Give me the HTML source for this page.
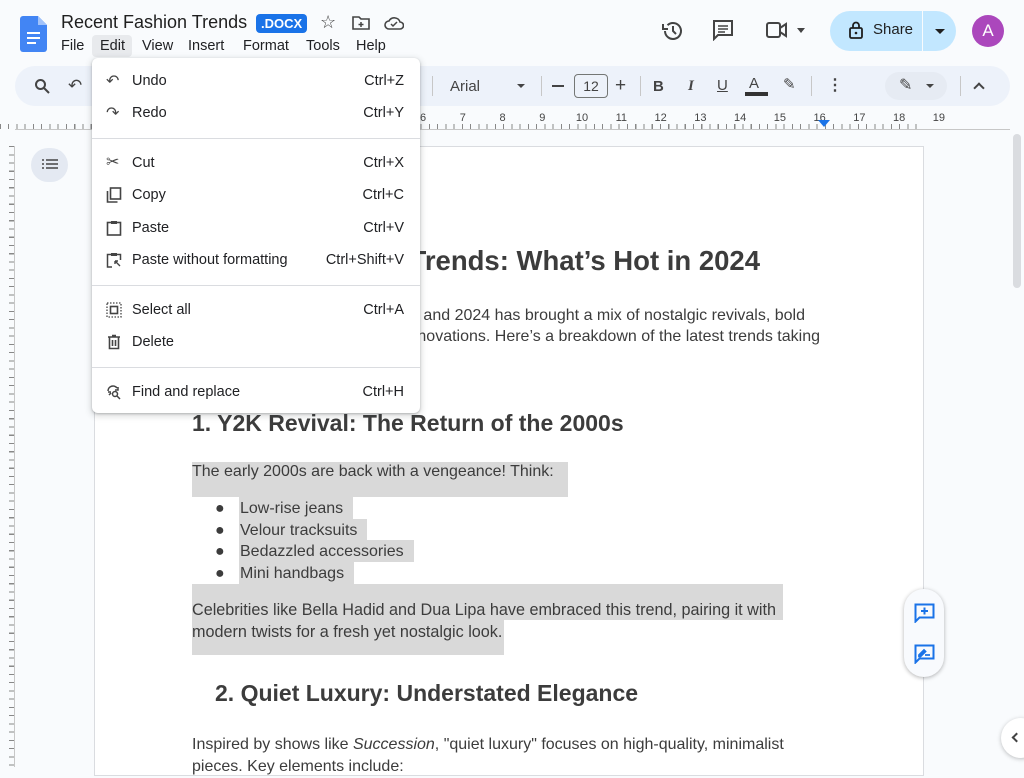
<!DOCTYPE html>
<html><head><meta charset="utf-8"><style>
*{margin:0;padding:0;box-sizing:border-box}
body{width:1024px;height:767px;overflow:hidden;background:#f9fbfd;font-family:"Liberation Sans",Arial,sans-serif;position:relative;color:#202124}
.a{position:absolute;white-space:nowrap}
.doc{color:#3c3c3c;font-size:16px}
.mi{position:absolute;left:0;width:328px;height:32px;font-size:14.5px;color:#202124}
.mi .t{position:absolute;left:40px;top:8px}
.mi .k{position:absolute;right:16px;top:8px}
.mi svg{position:absolute;left:14px;top:8px}
.sep{position:absolute;left:0;width:328px;height:1px;background:#dadce0}
.sel{position:absolute;background:#d9d9d9}
.mb{position:absolute;top:38px;font-size:14.5px;color:#202124}
</style></head><body>
<!-- header -->
<svg class="a" style="left:20px;top:16px" width="27" height="36" viewBox="0 0 27 36"><path d="M3 0h15l9 9v24a3 3 0 0 1-3 3H3a3 3 0 0 1-3-3V3a3 3 0 0 1 3-3z" fill="#4285f4"/><path d="M18 0v9h9z" fill="#a1c2fa"/><rect x="7" y="16" width="13" height="2" fill="#fff"/><rect x="7" y="21" width="13" height="2" fill="#fff"/><rect x="7" y="26" width="9" height="2" fill="#fff"/></svg>
<div class="a" style="left:61px;top:12px;font-size:18px;color:#1f1f1f">Recent Fashion Trends</div>
<div class="a" style="left:256px;top:14px;background:#1a73e8;color:#fff;font-size:13px;font-weight:bold;padding:2px 5px;border-radius:4px">.DOCX</div>
<div class="a" style="left:320px;top:12px;font-size:18px;color:#444">☆</div>
<svg class="a" style="left:352px;top:15px" width="18" height="16" viewBox="0 0 18 16"><path d="M1 2h6l2 2h8v10H1z" fill="none" stroke="#444" stroke-width="1.6"/><path d="M9 7v5M6.5 9.5h5" stroke="#444" stroke-width="1.5"/></svg>
<svg class="a" style="left:384px;top:15px" width="20" height="16" viewBox="0 0 20 16"><path d="M5 14a4 4 0 0 1 0-8 6 6 0 0 1 11 1 3.5 3.5 0 0 1 0 7z" fill="none" stroke="#444" stroke-width="1.6"/><path d="M7 9l2 2 4-4" fill="none" stroke="#444" stroke-width="1.5"/></svg>
<div class="a" style="left:92px;top:35px;width:40px;height:22px;background:#e8eaed;border-radius:4px"></div>
<div class="mb" style="left:61px">File</div>
<div class="mb" style="left:100px">Edit</div>
<div class="mb" style="left:142px">View</div>
<div class="mb" style="left:188px">Insert</div>
<div class="mb" style="left:243px">Format</div>
<div class="mb" style="left:306px">Tools</div>
<div class="mb" style="left:356px">Help</div>
<svg class="a" style="left:661px;top:19px" width="24" height="24" viewBox="0 0 24 24"><path d="M4 12a8 8 0 1 0 2.5-5.8" fill="none" stroke="#444" stroke-width="2"/><path d="M2 5v5h5" fill="none" stroke="#444" stroke-width="2"/><path d="M12 7v5l3 3" fill="none" stroke="#444" stroke-width="2"/></svg>
<svg class="a" style="left:712px;top:19px" width="22" height="22" viewBox="0 0 22 22"><path d="M2 2h18v14H6l-4 4z" fill="none" stroke="#444" stroke-width="2"/><path d="M6 7h10M6 10h10M6 13h7" stroke="#444" stroke-width="1.6"/></svg>
<svg class="a" style="left:766px;top:21px" width="22" height="18" viewBox="0 0 22 18"><rect x="1" y="2" width="13" height="14" rx="2" fill="none" stroke="#444" stroke-width="2"/><path d="M14 7l6-4v12l-6-4" fill="none" stroke="#444" stroke-width="2"/></svg>
<div class="a" style="left:797px;top:28px;width:0;height:0;border-left:4px solid transparent;border-right:4px solid transparent;border-top:5px solid #444"></div>
<div class="a" style="left:830px;top:11px;width:126px;height:40px;background:#c2e7ff;border-radius:20px"></div>
<div class="a" style="left:922px;top:11px;width:1px;height:40px;background:#f9fbfd"></div>
<svg class="a" style="left:849px;top:21px" width="14" height="18" viewBox="0 0 14 18"><rect x="1" y="7" width="12" height="10" rx="1.5" fill="none" stroke="#1f1f1f" stroke-width="1.8"/><path d="M4 7V4.5a3 3 0 0 1 6 0V7" fill="none" stroke="#1f1f1f" stroke-width="1.8"/><circle cx="7" cy="12" r="1.3" fill="#1f1f1f"/></svg>
<div class="a" style="left:873px;top:21px;font-size:15px;color:#1f1f1f">Share</div>
<div class="a" style="left:935px;top:29px;border-left:5px solid transparent;border-right:5px solid transparent;border-top:5px solid #1f1f1f"></div>
<div class="a" style="left:972px;top:15px;width:32px;height:32px;border-radius:50%;background:#ab47bc;color:#fff;font-size:17px;text-align:center;line-height:32px">A</div>
<!-- toolbar -->
<div class="a" style="left:15px;top:66px;width:995px;height:40px;background:#edf2fa;border-radius:20px"></div>
<svg class="a" style="left:34px;top:78px" width="16" height="16" viewBox="0 0 16 16"><circle cx="6.5" cy="6.5" r="4.5" fill="none" stroke="#444" stroke-width="2"/><path d="M10 10l5 5" stroke="#444" stroke-width="2"/></svg>
<div class="a" style="left:68px;top:76px;font-size:17px;color:#444">↶</div>
<div class="a" style="left:432px;top:76px;width:1px;height:20px;background:#c7c7c7"></div>
<div class="a" style="left:450px;top:78px;font-size:15px;color:#444">Arial</div>
<div class="a" style="left:517px;top:84px;border-left:4px solid transparent;border-right:4px solid transparent;border-top:4px solid #444"></div>
<div class="a" style="left:541px;top:76px;width:1px;height:20px;background:#c7c7c7"></div>
<div class="a" style="left:552px;top:85px;width:12px;height:1.5px;background:#444"></div>
<div class="a" style="left:574px;top:74px;width:34px;height:24px;border:1px solid #747775;border-radius:4px;font-size:14px;text-align:center;line-height:22px;color:#444">12</div>
<div class="a" style="left:615px;top:75px;font-size:19px;color:#444">+</div>
<div class="a" style="left:640px;top:76px;width:1px;height:20px;background:#c7c7c7"></div>
<div class="a" style="left:653px;top:78px;font-size:15px;font-weight:bold;color:#444">B</div>
<div class="a" style="left:688px;top:78px;font-size:15px;font-style:italic;font-family:'Liberation Serif',serif;font-weight:bold;color:#444">I</div>
<div class="a" style="left:717px;top:77px;font-size:15px;text-decoration:underline;color:#444">U</div>
<div class="a" style="left:749px;top:75px;font-size:15px;color:#444">A</div>
<div class="a" style="left:745px;top:92px;width:23px;height:4px;background:#333"></div>
<div class="a" style="left:783px;top:75px;font-size:15px;color:#444">✎</div>
<div class="a" style="left:811px;top:76px;width:1px;height:20px;background:#c7c7c7"></div>
<div class="a" style="left:827px;top:75px;font-size:16px;color:#444;font-weight:bold">⋮</div>
<div class="a" style="left:885px;top:72px;width:62px;height:28px;background:#e6ebf3;border-radius:14px"></div>
<div class="a" style="left:899px;top:75px;font-size:16px;color:#444">✎</div>
<div class="a" style="left:926px;top:84px;border-left:4px solid transparent;border-right:4px solid transparent;border-top:4px solid #444"></div>
<div class="a" style="left:960px;top:76px;width:1px;height:20px;background:#c7c7c7"></div>
<div class="a" style="left:975px;top:84px;width:8px;height:8px;border-left:2px solid #444;border-top:2px solid #444;transform:rotate(45deg)"></div>
<!-- ruler -->
<div class="a" style="left:420px;top:112px;font-size:11px;color:#444;letter-spacing:0">6&nbsp;&nbsp;&nbsp;&nbsp;&nbsp;&nbsp;&nbsp;&nbsp;&nbsp;&nbsp;&nbsp;7&nbsp;&nbsp;&nbsp;&nbsp;&nbsp;&nbsp;&nbsp;&nbsp;&nbsp;&nbsp;&nbsp;8&nbsp;&nbsp;&nbsp;&nbsp;&nbsp;&nbsp;&nbsp;&nbsp;&nbsp;&nbsp;&nbsp;9&nbsp;&nbsp;&nbsp;&nbsp;&nbsp;&nbsp;&nbsp;&nbsp;&nbsp;&nbsp;10&nbsp;&nbsp;&nbsp;&nbsp;&nbsp;&nbsp;&nbsp;&nbsp;&nbsp;11&nbsp;&nbsp;&nbsp;&nbsp;&nbsp;&nbsp;&nbsp;&nbsp;&nbsp;12&nbsp;&nbsp;&nbsp;&nbsp;&nbsp;&nbsp;&nbsp;&nbsp;&nbsp;13&nbsp;&nbsp;&nbsp;&nbsp;&nbsp;&nbsp;&nbsp;&nbsp;&nbsp;14&nbsp;&nbsp;&nbsp;&nbsp;&nbsp;&nbsp;&nbsp;&nbsp;&nbsp;15&nbsp;&nbsp;&nbsp;&nbsp;&nbsp;&nbsp;&nbsp;&nbsp;&nbsp;16&nbsp;&nbsp;&nbsp;&nbsp;&nbsp;&nbsp;&nbsp;&nbsp;&nbsp;17&nbsp;&nbsp;&nbsp;&nbsp;&nbsp;&nbsp;&nbsp;&nbsp;&nbsp;18&nbsp;&nbsp;&nbsp;&nbsp;&nbsp;&nbsp;&nbsp;&nbsp;&nbsp;19</div>
<div class="a" style="left:15px;top:129px;width:995px;height:1px;background:#c7c7c7"></div>
<div class="a" style="left:0;top:124px;width:924px;height:5px;background:repeating-linear-gradient(90deg,#888 0 1px,transparent 1px 8.25px)"></div>
<div class="a" style="left:818px;top:120px;border-left:6px solid transparent;border-right:6px solid transparent;border-top:7px solid #1a73e8"></div>
<!-- left ruler -->
<div class="a" style="left:14px;top:146px;width:1px;height:621px;background:#c7c7c7"></div>
<div class="a" style="left:9px;top:146px;width:5px;height:621px;background:repeating-linear-gradient(180deg,#888 0 1px,transparent 1px 8.25px)"></div>
<!-- page -->
<div class="a" style="left:94px;top:146px;width:830px;height:630px;background:#fff;border:1px solid #dadce0"></div>
<div class="a" style="left:31px;top:148px;width:37px;height:34px;border-radius:17px;background:#e4e9f2"></div>
<svg class="a" style="left:42px;top:159px" width="16" height="12" viewBox="0 0 16 12"><path d="M0 1h2M4 1h12M0 5h2M4 5h12M0 9h2M4 9h12" stroke="#444" stroke-width="1.6"/></svg>
<!-- doc content -->
<div class="a" style="right:264px;top:245px;font-size:27.5px;font-weight:bold;color:#3c3c3c">Recent Fashion Trends: What’s Hot in 2024</div>
<div class="a doc" style="right:219px;top:307px">Fashion in 2023 and 2024 has brought a mix of nostalgic revivals, bold</div>
<div class="a doc" style="right:204px;top:328px">sustainable innovations. Here’s a breakdown of the latest trends taking</div>
<div class="a" style="left:192px;top:410px;font-size:23px;font-weight:bold;color:#3c3c3c">1. Y2K Revival: The Return of the 2000s</div>
<div class="sel" style="left:192px;top:462px;width:376px;height:35px"></div>
<div class="sel" style="left:239px;top:497px;width:114px;height:22px"></div>
<div class="sel" style="left:239px;top:519px;width:128px;height:22px"></div>
<div class="sel" style="left:239px;top:540px;width:175px;height:22px"></div>
<div class="sel" style="left:239px;top:562px;width:115px;height:22px"></div>
<div class="sel" style="left:192px;top:584px;width:591px;height:36px"></div>
<div class="sel" style="left:192px;top:620px;width:312px;height:35px"></div>
<div class="a doc" style="left:192px;top:463px">The early 2000s are back with a vengeance! Think:</div>
<div class="a doc" style="left:215px;top:498px;line-height:21.6px">●<br>●<br>●<br>●</div>
<div class="a doc" style="left:240px;top:498px;line-height:21.6px">Low-rise jeans<br>Velour tracksuits<br>Bedazzled accessories<br>Mini handbags</div>
<div class="a doc" style="left:192px;top:599px;line-height:22px;font-size:16.2px">Celebrities like Bella Hadid and Dua Lipa have embraced this trend, pairing it with<br>modern twists for a fresh yet nostalgic look.</div>
<div class="a" style="left:215px;top:680px;font-size:23px;font-weight:bold;color:#3c3c3c">2. Quiet Luxury: Understated Elegance</div>
<div class="a doc" style="left:192px;top:734px;line-height:22px">Inspired by shows like <i>Succession</i>, "quiet luxury" focuses on high-quality, minimalist<br>pieces. Key elements include:</div>
<!-- side floating -->
<div class="a" style="left:904px;top:589px;width:40px;height:88px;background:#f8fafd;border-radius:20px;box-shadow:0 1px 4px rgba(0,0,0,.3)"></div>
<svg class="a" style="left:914px;top:603px" width="21" height="20" viewBox="0 0 21 20"><path d="M1.5 1.5h18v13h-14l-4 4z" fill="none" stroke="#1a73e8" stroke-width="2"/><path d="M10.5 4.5v7M7 8h7" stroke="#1a73e8" stroke-width="2"/></svg>
<svg class="a" style="left:914px;top:644px" width="21" height="20" viewBox="0 0 21 20"><path d="M1.5 1.5h18v13h-14l-4 4z" fill="none" stroke="#1a73e8" stroke-width="2"/><path d="M5 11l5-5 1.5 1.5-5 5H5zM11 11h5" stroke="#1a73e8" stroke-width="1.8" fill="#1a73e8"/></svg>
<div class="a" style="left:1001px;top:718px;width:40px;height:40px;border-radius:20px;background:#fff;box-shadow:0 1px 4px rgba(0,0,0,.25)"></div>
<div class="a" style="left:1013px;top:734px;width:7px;height:7px;border-left:2px solid #444;border-bottom:2px solid #444;transform:rotate(45deg)"></div>
<div class="a" style="left:1013px;top:134px;width:8px;height:154px;border-radius:4px;background:#dadce0"></div>
<!-- menu -->
<div class="a" style="left:92px;top:58px;width:328px;height:355px;background:#fff;border-radius:6px;box-shadow:0 2px 6px 2px rgba(60,64,67,.15),0 1px 2px rgba(60,64,67,.3)">
 <div class="mi" style="top:7px"><span style="position:absolute;left:14px;top:6px;font-size:16px;color:#444">↶</span><span class="t">Undo</span><span class="k">Ctrl+Z</span></div>
 <div class="mi" style="top:39px"><span style="position:absolute;left:14px;top:6px;font-size:16px;color:#444">↷</span><span class="t">Redo</span><span class="k">Ctrl+Y</span></div>
 <div class="sep" style="top:80px"></div>
 <div class="mi" style="top:89px"><span style="position:absolute;left:14px;top:5px;font-size:16px;color:#444">✂</span><span class="t">Cut</span><span class="k">Ctrl+X</span></div>
 <div class="mi" style="top:121px"><svg width="16" height="16" viewBox="0 0 16 16"><rect x="4.5" y="1" width="10" height="11" fill="none" stroke="#444" stroke-width="1.6"/><path d="M1.5 4v11h10" fill="none" stroke="#444" stroke-width="1.6"/></svg><span class="t">Copy</span><span class="k">Ctrl+C</span></div>
 <div class="mi" style="top:154px"><svg width="16" height="16" viewBox="0 0 16 16"><rect x="1.5" y="2.5" width="13" height="12.5" fill="none" stroke="#444" stroke-width="1.6"/><rect x="5" y="1" width="6" height="3" fill="#444"/></svg><span class="t">Paste</span><span class="k">Ctrl+V</span></div>
 <div class="mi" style="top:186px"><svg width="16" height="16" viewBox="0 0 16 16"><path d="M6 15H1.5V2.5h13V8" fill="none" stroke="#444" stroke-width="1.5"/><rect x="5" y="1" width="6" height="3" fill="#444"/><path d="M9 9l5 5M9 9h3M9 9v3" stroke="#444" stroke-width="1.4" fill="none"/></svg><span class="t">Paste without formatting</span><span class="k">Ctrl+Shift+V</span></div>
 <div class="sep" style="top:227px"></div>
 <div class="mi" style="top:236px"><svg width="16" height="16" viewBox="0 0 16 16"><rect x="1" y="1" width="14" height="14" fill="none" stroke="#444" stroke-width="1.3" stroke-dasharray="1.5 1.5"/><rect x="4.5" y="4.5" width="7" height="7" fill="none" stroke="#444" stroke-width="1.6"/></svg><span class="t">Select all</span><span class="k">Ctrl+A</span></div>
 <div class="mi" style="top:268px"><svg width="16" height="16" viewBox="0 0 16 16"><path d="M2 3h12M6 1.5h4M3.5 3.5v11h9v-11M6.5 6v6M9.5 6v6" fill="none" stroke="#444" stroke-width="1.6"/></svg><span class="t">Delete</span></div>
 <div class="sep" style="top:309px"></div>
 <div class="mi" style="top:318px"><svg width="16" height="16" viewBox="0 0 16 16"><path d="M2 7a5 5 0 0 1 9-3M12 3v3H9M3 11l2-2M2 8h3" fill="none" stroke="#444" stroke-width="1.5"/><circle cx="9" cy="10" r="2.5" fill="none" stroke="#444" stroke-width="1.5"/><path d="M11 12l3 3" stroke="#444" stroke-width="1.5"/></svg><span class="t">Find and replace</span><span class="k">Ctrl+H</span></div>
</div>
</body></html>
